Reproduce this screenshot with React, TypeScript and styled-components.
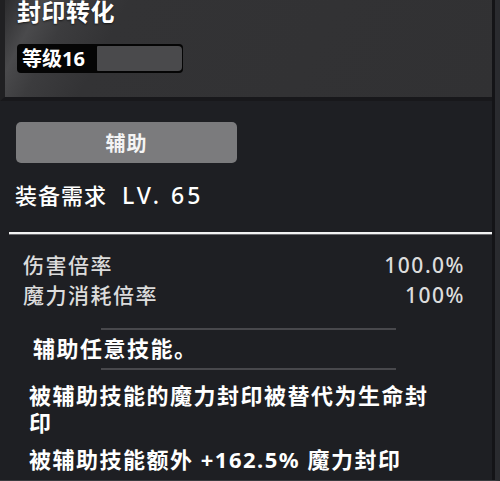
import React, { FC } from 'react';
import styled, { createGlobalStyle } from 'styled-components';

const GlobalStyle = createGlobalStyle`
  html, body {
    margin: 0;
    padding: 0;
    background: #1e1f23;
  }
  body {
    font-family: "Noto Sans", "Noto Sans CJK SC", sans-serif;
  }
`;

const Panel = styled.div`
  width: 500px;
  height: 481px;
  box-sizing: border-box;
  display: flex;
  flex-direction: column;
  background: #1e1f23;
  border-right: 5px solid #2a2b2f;
  border-bottom: 1px solid #3a3b3f;
  overflow: hidden;
  position: relative;
  color: #ffffff;
`;

const RightRule = styled.div`
  position: absolute;
  top: 0;
  right: 0;
  width: 3px;
  height: 100%;
  background: #141417;
`;

const Header = styled.div`
  height: 101px;
  box-sizing: border-box;
  padding: 0 0 0 12px;
  border-left: 5px solid #202022;
  border-bottom: 4px solid #18181b;
  background: linear-gradient(
    118deg,
    #2c2c2e 0px,
    #4a4a4c 34px,
    #3c3c3e 62px,
    #333335 110px,
    #313133 100%
  );
  display: flex;
  flex-direction: column;
  align-items: flex-start;
`;

const Title = styled.h1`
  margin: 0;
  font-size: 24px;
  line-height: 24px;
  font-weight: 700;
  letter-spacing: 0.5px;
  color: #ffffff;
  text-shadow: 0 1px 2px rgba(0, 0, 0, 0.6);
`;

const LevelBadge = styled.div`
  margin-top: 20px;
  width: 166px;
  height: 29px;
  box-sizing: border-box;
  display: flex;
  align-items: center;
  background: #050505;
  border-radius: 4px;
  padding: 2px 1px 2px 5px;
`;

const LevelText = styled.span`
  font-size: 20px;
  font-weight: 700;
  line-height: 25px;
  width: 75px;
  color: #ffffff;
`;

const LevelBar = styled.div`
  flex: 1;
  height: 100%;
  background: #4a4a4c;
  border-radius: 1px 4px 4px 1px;
`;

const Body = styled.div`
  display: flex;
  flex-direction: column;
  padding: 21px 0 0;
`;

const TypeButton = styled.div`
  margin-left: 16px;
  width: 221px;
  height: 41px;
  display: flex;
  align-items: center;
  justify-content: center;
  background: #7b7b7d;
  border-radius: 5px;
  font-size: 20px;
  font-weight: 700;
  letter-spacing: 1px;
  color: #f4f4f4;
`;

const Requirement = styled.div`
  margin: 17px 0 0 15px;
  font-size: 22px;
  line-height: 30px;
  font-weight: 500;
  letter-spacing: 1px;
  color: #ffffff;
`;

const RequirementLevel = styled.span`
  margin-left: 15px;
  font-size: 23px;
  letter-spacing: 3px;
`;

const Divider = styled.div`
  margin: 22px 0 0 9px;
  width: 486px;
  height: 2px;
  background: #f2f2f2;
  border-bottom: 1px solid #6a6a6e;
`;

const StatList = styled.div`
  margin-top: 15px;
  display: flex;
  flex-direction: column;
  padding: 0 30px 0 23px;
`;

const StatRow = styled.div`
  display: flex;
  justify-content: space-between;
  font-size: 21px;
  line-height: 30px;
  font-weight: 500;
  letter-spacing: 1.5px;
  color: #dcdcdc;
`;

const Separator = styled.div<{ $gap: number }>`
  margin: ${(p) => p.$gap}px 0 0 101px;
  width: 295px;
  height: 2px;
  background: #48484c;
`;

const Effect = styled.p<{ $indent: number; $gap: number }>`
  margin: ${(p) => p.$gap}px 0 0 ${(p) => p.$indent}px;
  width: 412px;
  font-size: 22px;
  line-height: 27px;
  font-weight: 700;
  letter-spacing: 1.5px;
  color: #ffffff;
`;

const stats = [
  { label: '伤害倍率', value: '100.0%' },
  { label: '魔力消耗倍率', value: '100%' },
];

const App: FC = () => (
  <>
    <GlobalStyle />
    <Panel>
      <RightRule />
      <Header>
        <Title>封印转化</Title>
        <LevelBadge>
          <LevelText>等级16</LevelText>
          <LevelBar />
        </LevelBadge>
      </Header>
      <Body>
        <TypeButton>辅助</TypeButton>
        <Requirement>
          装备需求<RequirementLevel>LV. 65</RequirementLevel>
        </Requirement>
        <Divider />
        <StatList>
          {stats.map((s) => (
            <StatRow key={s.label}>
              <span>{s.label}</span>
              <span>{s.value}</span>
            </StatRow>
          ))}
        </StatList>
        <Separator $gap={18} />
        <Effect $indent={33} $gap={5}>辅助任意技能。</Effect>
        <Separator $gap={6} />
        <Effect $indent={29} $gap={12}>被辅助技能的魔力封印被替代为生命封印</Effect>
        <Effect $indent={29} $gap={10}>被辅助技能额外 +162.5% 魔力封印</Effect>
      </Body>
    </Panel>
  </>
);

export default App;
